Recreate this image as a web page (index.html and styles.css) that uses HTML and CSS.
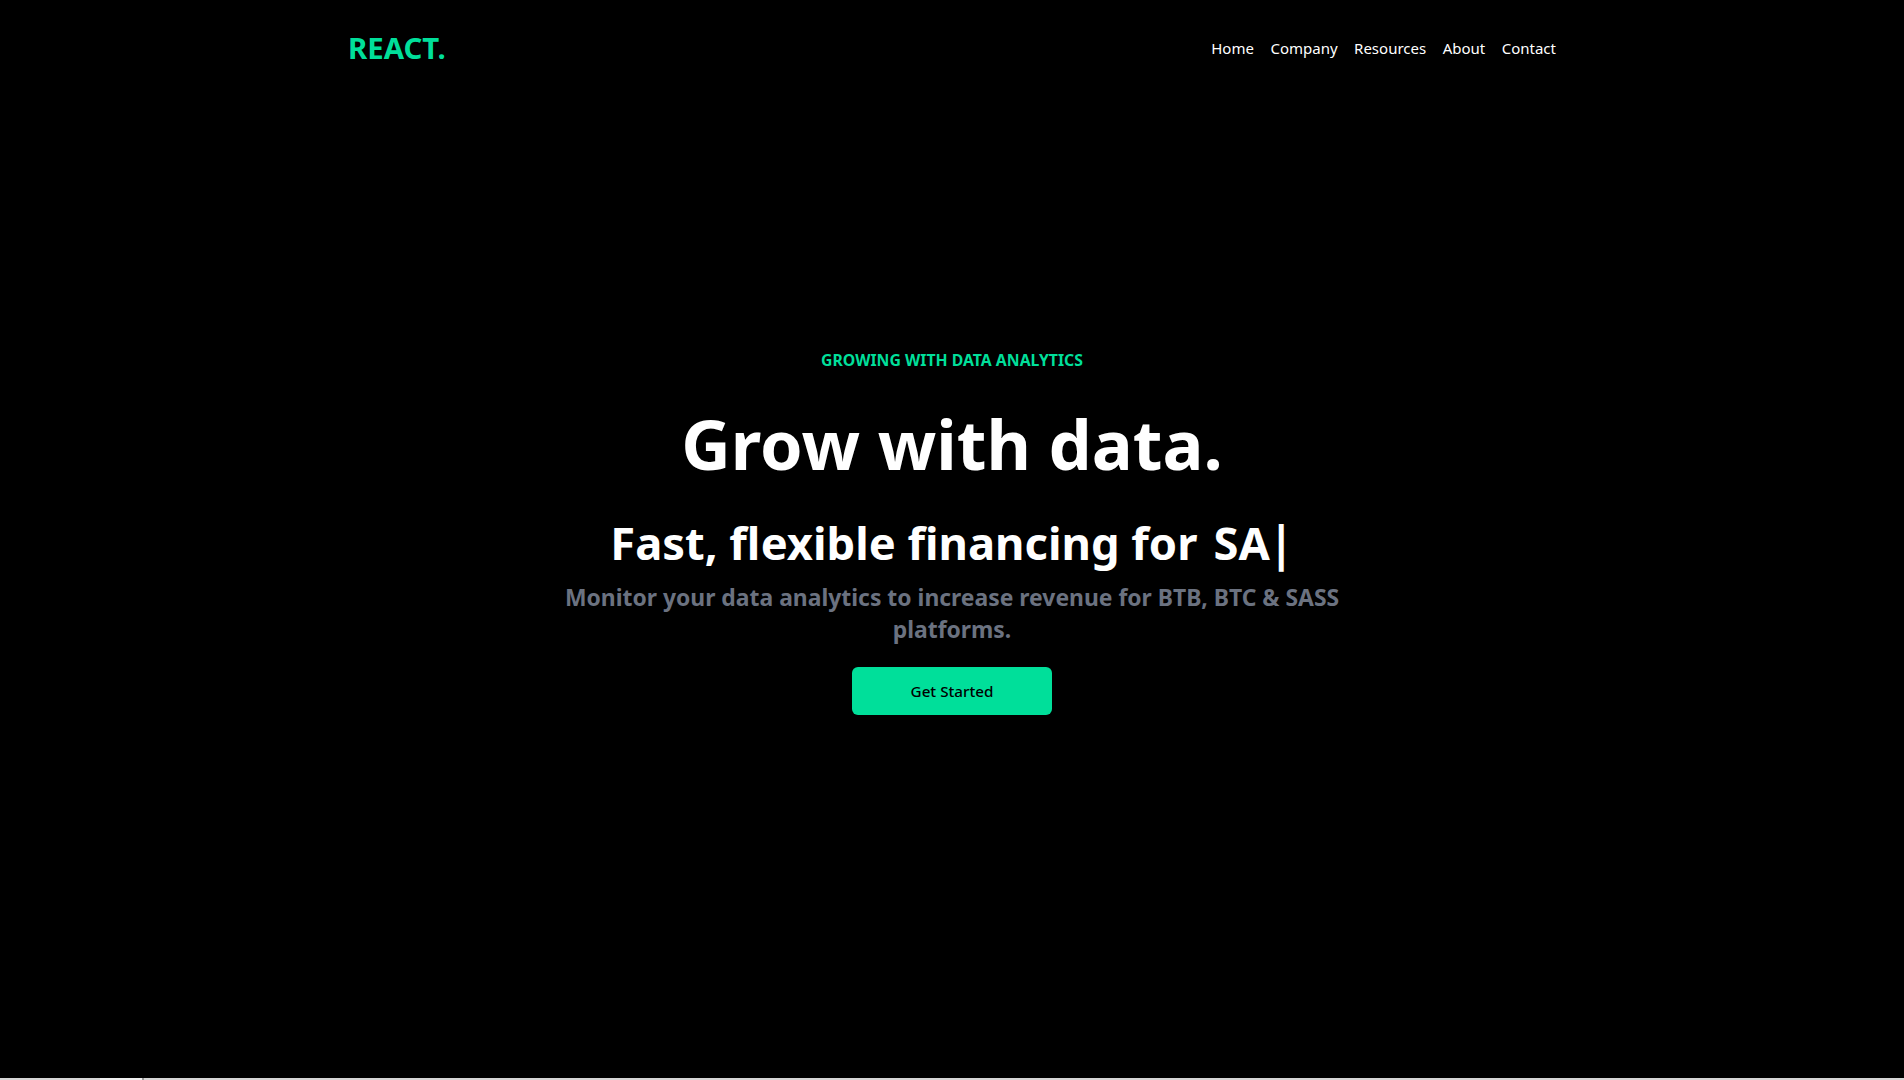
FILE: index.html
```html
<!DOCTYPE html>
<html lang="en">
<head>
<meta charset="utf-8">
<title>React</title>
<link rel="stylesheet" href="styles.css">
</head>
<body>
<header class="navbar">
  <h1 class="logo">REACT.</h1>
  <ul class="nav-links">
    <li>Home</li>
    <li>Company</li>
    <li>Resources</li>
    <li>About</li>
    <li>Contact</li>
  </ul>
</header>
<section class="hero">
  <p class="eyebrow">GROWING WITH DATA ANALYTICS</p>
  <h1 class="headline">Grow with data.</h1>
  <div class="typed-row">
    <p class="typed-static">Fast, flexible financing for</p>
    <span class="typed-text">SA</span><span class="typed-cursor">|</span>
  </div>
  <p class="lead">Monitor your data analytics to increase revenue for BTB, BTC &amp; SASS platforms.</p>
  <button class="cta">Get Started</button>
</section>
<div class="bottom-strip"><span class="thumb"></span></div>
</body>
</html>
```
FILE: styles.css
```css
* { box-sizing: border-box; }
html, body { margin: 0; padding: 0; }
body {
  background: #000;
  color: #fff;
  font-family: "Noto Sans", "Open Sans", sans-serif;
  overflow: hidden;
  height: 1080px;
}
.navbar {
  max-width: 1240px;
  height: 96px;
  margin: 0 auto;
  padding: 0 16px;
  display: flex;
  justify-content: space-between;
  align-items: center;
  position: relative;
  z-index: 2;
}
.logo {
  margin: 0;
  font-size: 29.4px;
  font-weight: 700;
  color: #00df9a;
  line-height: 36px;
}
.nav-links {
  list-style: none;
  margin: 0;
  padding: 0;
  display: flex;
  gap: 16.5px;
  font-size: 15px;
  line-height: 24px;
  color: #fff;
}
.hero {
  max-width: 800px;
  width: 100%;
  height: calc(100vh - 2px);
  margin: -96px auto 0;
  display: flex;
  flex-direction: column;
  justify-content: center;
  text-align: center;
}
.eyebrow {
  margin: 0;
  padding: 9px 8px 7px;
  color: #00df9a;
  font-weight: 700;
  font-size: 15.8px;
  line-height: 24px;
}
.headline {
  margin: 0;
  padding: 29px 0 19px;
  font-size: 68.4px;
  line-height: 72px;
  font-weight: 700;
}
.typed-row {
  display: flex;
  justify-content: center;
  align-items: center;
  font-size: 45.3px;
  font-weight: 700;
  line-height: 48px;
  padding: 20px 0 12px;
}
.typed-static {
  margin: 0;
}
.typed-text {
  padding-left: 16px;
}
.typed-cursor {
  font-weight: 700;
  margin-left: -1px;
  display: inline-block;
  transform: scaleY(1.08);
}
.lead {
  margin: 0;
  padding-top: 3px;
  font-size: 22.9px;
  line-height: 32px;
  font-weight: 700;
  color: #6b7280;
}
.cta {
  display: block;
  width: 200px;
  margin: 21px auto 24px;
  padding: 12px 0;
  border: 0;
  border-radius: 6px;
  background: #00df9a;
  color: #000;
  font-family: inherit;
  font-size: 15.2px;
  font-weight: 500;
  line-height: 24px;
}
.bottom-strip {
  height: 2px;
  background: #d6d6d6;
}
.thumb {
  display: block;
  margin-left: 100px;
  width: 44px;
  height: 2px;
  background: #f0f0f0;
  border-right: 2px solid #9a9a9a;
}
```
